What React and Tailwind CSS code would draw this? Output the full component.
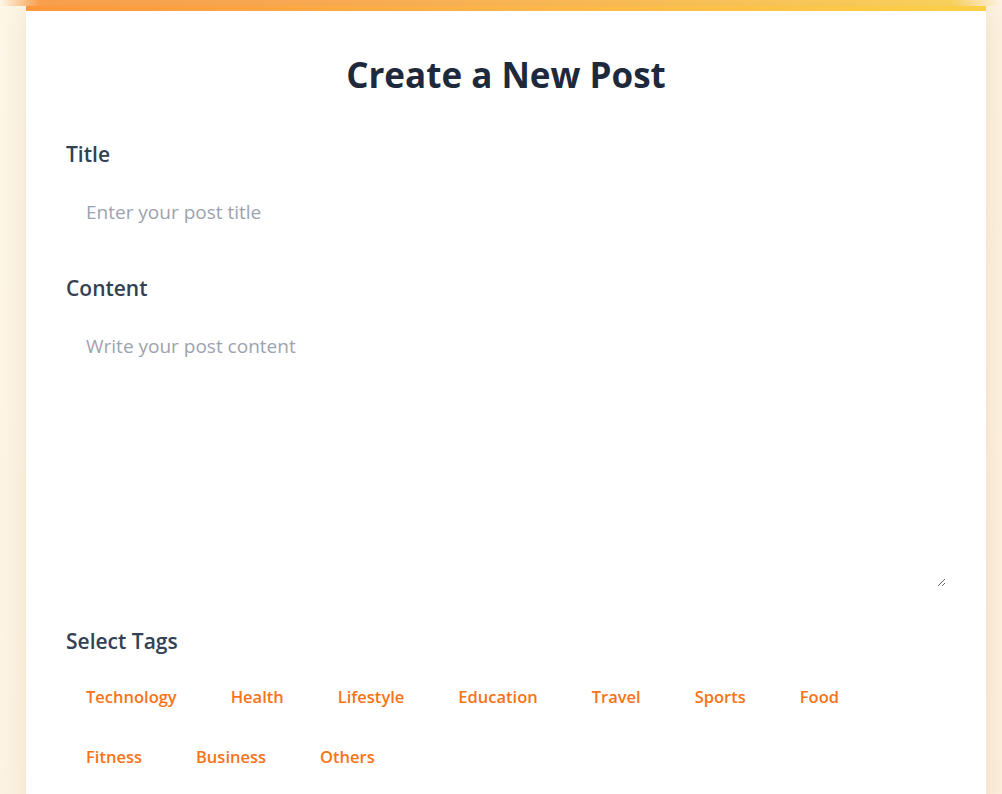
import React from "react";

const tags = ["Technology", "Health", "Lifestyle", "Education", "Travel", "Sports", "Food", "Fitness", "Business", "Others"];

export default function App() {
  return (
    <div className="h-[794px] overflow-hidden bg-[linear-gradient(135deg,#fef7e7,#fdf0de)] font-['Open_Sans','Noto_Sans',sans-serif]">
      <div className="h-[6px] bg-[linear-gradient(to_right,rgba(253,160,74,0)_0px,#fda24f_40px,#fdae56_330px,#fdc25a_660px,#fdd660_950px,rgba(253,214,96,0)_1000px)]" />
      <div className="ml-[26px] w-[960px] bg-white pb-10 shadow-[0_0_28px_rgba(150,100,30,0.14)]">
        <div className="h-[5px] bg-[linear-gradient(to_right,#fe973a,#fdb548_50%,#fcd046)]" />
        <div className="px-10 pt-11">
          <h1 className="mb-[45px] text-center text-[35px] font-bold leading-10 text-[#1e293b]">Create a New Post</h1>

          <div className="mb-7">
            <label className="mb-2.5 block text-[21px] font-semibold leading-7 text-[#334155]">Title</label>
            <input
              type="text"
              placeholder="Enter your post title"
              className="block w-full border-0 bg-white p-5 text-[19px] leading-7 text-[#1e293b] outline-none placeholder:text-[#9ca3af]"
            />
          </div>

          <div className="mb-10">
            <label className="mb-2.5 block text-[21px] font-semibold leading-7 text-[#334155]">Content</label>
            <textarea
              placeholder="Write your post content"
              className="block h-[275px] w-full border-0 bg-white p-5 text-[19px] leading-7 text-[#1e293b] outline-none placeholder:text-[#9ca3af]"
            />
          </div>

          <div>
            <label className="mb-[18px] block text-[21px] font-semibold leading-7 text-[#334155]">Select Tags</label>
            <div className="flex flex-wrap gap-x-3.5 gap-y-3">
              {tags.map((t) => (
                <button
                  key={t}
                  type="button"
                  className="rounded-lg bg-white px-5 py-2.5 text-[16.5px] font-semibold leading-7 text-[#f97316]"
                >
                  {t}
                </button>
              ))}
            </div>
          </div>
        </div>
      </div>
    </div>
  );
}
